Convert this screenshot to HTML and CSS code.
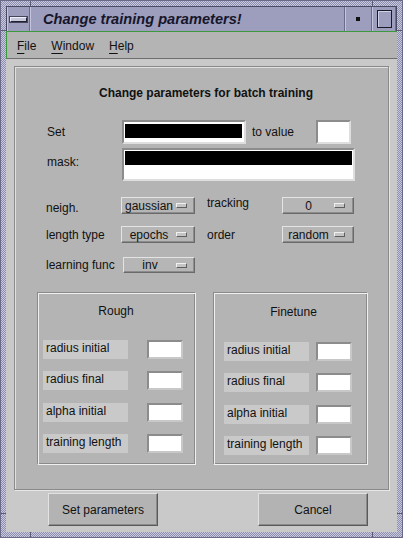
FILE: index.html
```html
<!DOCTYPE html>
<html>
<head>
<meta charset="utf-8">
<link rel="stylesheet" href="styles.css">
</head>
<body>
<div class="frame">
  <div class="titlebar">
    <div class="tb-btn tb-menu"><span class="tb-bar"></span></div>
    <div class="tb-title">Change training parameters!</div>
    <div class="tb-btn tb-min"><span class="tb-dot"></span></div>
    <div class="tb-btn tb-max"><span class="tb-sq"></span></div>
  </div>
  <div class="client">
    <div class="menubar">
      <span class="menu"><u>F</u>ile</span>
      <span class="menu"><u>W</u>indow</span>
      <span class="menu"><u>H</u>elp</span>
    </div>
    <div class="content">
      <div class="panel">
        <div class="heading">Change parameters for batch training</div>

        <div class="row row-set">
          <span class="lbl">Set</span>
          <div class="field field-set"><span class="sel"></span></div>
          <span class="lbl lbl-to">to value</span>
          <div class="field field-val"></div>
        </div>

        <div class="row row-mask">
          <span class="lbl lbl-mask">mask:</span>
          <div class="field field-mask"><span class="sel"></span></div>
        </div>

        <div class="row row-opt row-neigh">
          <span class="lbl lbl-low">neigh.</span>
          <div class="opt opt-a"><span class="opt-text">gaussian</span><span class="ind"></span></div>
          <span class="lbl lbl-2 lbl-high">tracking</span>
          <div class="opt opt-b"><span class="opt-text">0</span><span class="ind"></span></div>
        </div>

        <div class="row row-opt row-len">
          <span class="lbl">length type</span>
          <div class="opt opt-a"><span class="opt-text">epochs</span><span class="ind"></span></div>
          <span class="lbl lbl-2">order</span>
          <div class="opt opt-b"><span class="opt-text">random</span><span class="ind"></span></div>
        </div>

        <div class="row row-opt row-learn">
          <span class="lbl lbl-learn">learning func</span>
          <div class="opt opt-c"><span class="opt-text">inv</span><span class="ind"></span></div>
        </div>

        <div class="groups">
          <div class="group group-rough">
            <div class="group-title">Rough</div>
            <div class="group-rows">
              <div class="grow"><span class="glbl">radius initial</span><span class="gin"></span></div>
              <div class="grow"><span class="glbl">radius final</span><span class="gin"></span></div>
              <div class="grow"><span class="glbl">alpha initial</span><span class="gin"></span></div>
              <div class="grow"><span class="glbl">training length</span><span class="gin"></span></div>
            </div>
          </div>
          <div class="group group-fine">
            <div class="group-title">Finetune</div>
            <div class="group-rows">
              <div class="grow"><span class="glbl">radius initial</span><span class="gin"></span></div>
              <div class="grow"><span class="glbl">radius final</span><span class="gin"></span></div>
              <div class="grow"><span class="glbl">alpha initial</span><span class="gin"></span></div>
              <div class="grow"><span class="glbl">training length</span><span class="gin"></span></div>
            </div>
          </div>
        </div>
      </div>
      <div class="buttons">
        <div class="btn">Set parameters</div>
        <div class="btn">Cancel</div>
      </div>
    </div>
  </div>
</div>
</body>
</html>
```

FILE: styles.css
```css
* { box-sizing: border-box; }
html, body { margin: 0; padding: 0; }
body {
  width: 403px;
  height: 538px;
  overflow: hidden;
  font-family: "Liberation Sans", Arial, sans-serif;
  font-size: 12px;
  color: #000;
  background: #b4b4cc;
}

.frame {
  width: 403px;
  height: 538px;
  padding: 6px;
  display: flex;
  flex-direction: column;
  background:
    linear-gradient(#5a5a74, #5a5a74) 30px 0 / 1px 6px no-repeat,
    linear-gradient(#5a5a74, #5a5a74) 372px 0 / 1px 6px no-repeat,
    linear-gradient(#5a5a74, #5a5a74) 30px 532px / 1px 6px no-repeat,
    linear-gradient(#5a5a74, #5a5a74) 372px 532px / 1px 6px no-repeat,
    linear-gradient(#5a5a74, #5a5a74) 0 30px / 6px 1px no-repeat,
    linear-gradient(#5a5a74, #5a5a74) 0 513px / 6px 1px no-repeat,
    linear-gradient(#5a5a74, #5a5a74) 397px 30px / 6px 1px no-repeat,
    linear-gradient(#5a5a74, #5a5a74) 397px 513px / 6px 1px no-repeat,
    repeating-conic-gradient(#8e8eae 0 25%, #c8c8de 0 50%) 0 0 / 2px 2px;
  box-shadow: inset 0 0 0 1px #6a6a88;
}

/* title bar */
.titlebar {
  height: 25px;
  flex: none;
  display: flex;
  background: #9d9dbd;
  border: 1px solid #4a4a62;
  border-bottom: none;
}
.tb-btn {
  display: flex;
  align-items: center;
  justify-content: center;
  border-left: 1px solid #c4c4dc;
  border-right: 1px solid #6c6c8a;
}
.tb-menu { width: 23px; }
.tb-title {
  flex: 1;
  padding-left: 12px;
  font-weight: bold;
  font-style: italic;
  font-size: 14.6px;
  line-height: 24px;
  color: #16162a;
  border-left: 1px solid #c4c4dc;
  border-right: 1px solid #6c6c8a;
}
.tb-min { width: 27px; }
.tb-max { width: 24px; }
.tb-bar {
  width: 17px;
  height: 5px;
  background: #c8c8dc;
  border: 1px solid #22222e;
  border-top-color: #f0f0ff;
  border-left-color: #f0f0ff;
  box-shadow: 0 0 0 1px #44445a;
  margin-top: 1px;
}
.tb-dot {
  width: 4px;
  height: 4px;
  background: #111;
  margin-right: 2px;
}
.tb-sq {
  width: 15px;
  height: 18px;
  border: 1px solid #1a1a28;
  box-shadow: inset 1px 1px 0 #d0d0e6;
}

/* client */
.client {
  flex: 1;
  display: flex;
  flex-direction: column;
  background: #c9c9c9;
}
.menubar {
  height: 28px;
  flex: none;
  display: flex;
  align-items: center;
  gap: 15px;
  padding-left: 10px;
  padding-top: 1px;
  background: #b4b4b4;
  border-top: 1px solid #3c9a3c;
  border-left: 1px solid #3c9a3c;
  border-bottom: 1px solid #6e6e6e;
  color: #111;
}
.menu u { text-underline-offset: 3px; }

.content {
  flex: 1;
  display: flex;
  flex-direction: column;
  padding: 7px 8px 6px 8px;
}
.panel {
  height: 424px;
  flex: none;
  background: #b4b4b4;
  border: 1px solid #8a8a8a;
  box-shadow: 1px 1px 0 #e6e6e6, inset 1px 1px 0 #e0e0e0;
  display: flex;
  flex-direction: column;
  padding-left: 31px;
}
.heading {
  margin-top: 19px;
  margin-left: -22px;
  text-align: center;
  font-weight: bold;
  line-height: 14px;
  color: #111;
}

.row {
  display: flex;
  align-items: center;
}
.lbl {
  width: 75px;
  flex: none;
  line-height: 14px;
  color: #111;
}
.row-set { margin-top: 20px; height: 24px; margin-left: 1px; }
.lbl-to { width: 64px; margin-left: 6px; }
.field {
  background: #fff;
  border: 2px solid;
  border-color: #8c8c8c #dedede #dedede #8c8c8c;
}
.field-set { width: 124px; height: 24px; }
.field-val { width: 35px; height: 24px; }
.field-set .sel {
  display: block;
  height: 14px;
  margin: 2px 2px 0 1px;
  background: #000;
}
.row-mask { margin-top: 4px; height: 33px; align-items: flex-start; margin-left: 1px; }
.lbl-mask { margin-top: 7px; }
.field-mask { width: 233px; height: 33px; }
.field-mask .sel {
  display: block;
  height: 14px;
  margin: 1px 1px 0 1px;
  background: #000;
}

.row-opt { height: 17px; }
.row-neigh { margin-top: 16px; }
.row-len { margin-top: 12px; }
.row-learn { margin-top: 14px; height: 16px; }
.lbl-low { position: relative; top: 2px; }
.lbl-high { position: relative; top: -3px; }
.lbl-2 { margin-left: 12px; }
.lbl-learn { width: 77px; }

.opt {
  height: 100%;
  display: flex;
  align-items: center;
  padding-right: 7px;
  background: #b6b6b6;
  border: 1px solid;
  border-color: #e4e4e4 #6a6a6a #6a6a6a #e4e4e4;
  box-shadow: inset -1px -1px 0 #8c8c8c;
  color: #111;
}
.opt-a { width: 74px; }
.opt-b { width: 72px; padding-right: 8px; }
.opt-c { width: 72px; }
.opt-text {
  flex: 1;
  text-align: center;
  line-height: 14px;
  white-space: nowrap;
}
.ind {
  width: 11px;
  height: 5px;
  flex: none;
  background: #c4c4c4;
  border: 1px solid;
  border-color: #f0f0f0 #5e5e5e #5e5e5e #f0f0f0;
}

/* group boxes */
.groups {
  margin-top: 19px;
  margin-left: -9px;
  display: flex;
  gap: 17px;
}
.group {
  height: 173px;
  border: 1px solid;
  border-color: #8a8a8a #f0f0f0 #f0f0f0 #8a8a8a;
  box-shadow: inset 1px 1px 0 #f0f0f0, inset -1px -1px 0 #8a8a8a;
  display: flex;
  flex-direction: column;
}
.group-rough { width: 159px; padding: 11px 0 0 5px; }
.group-fine { width: 155px; padding: 12px 0 0 10px; }
.group-title {
  line-height: 14px;
  text-align: center;
  color: #111;
}
.group-rough .group-title { margin-right: 6px; }
.group-fine .group-title { margin-left: -4px; }
.group-rows {
  display: flex;
  flex-direction: column;
  gap: 12.33px;
}
.group-rough .group-rows { margin-top: 22px; }
.group-fine .group-rows { margin-top: 23px; }
.grow {
  display: flex;
  height: 19px;
}
.glbl {
  width: 85px;
  flex: none;
  background: #c9c9c9;
  padding-left: 3px;
  line-height: 17px;
  color: #111;
  white-space: nowrap;
}
.group-rough .glbl { margin-right: 19px; }
.group-fine .glbl { margin-right: 7px; }
.gin {
  width: 36px;
  height: 19px;
  background: #fff;
  border: 2px solid;
  border-color: #8c8c8c #c8c8c8 #c8c8c8 #8c8c8c;
}

/* bottom buttons */
.buttons {
  margin-top: 3px;
  display: flex;
  gap: 100px;
  padding-left: 34px;
}
.btn {
  width: 110px;
  height: 33px;
  display: flex;
  align-items: center;
  justify-content: center;
  background: #b3b3b3;
  border: 1px solid;
  border-color: #e2e2e2 #5a5a5a #5a5a5a #e2e2e2;
  box-shadow: inset -1px -1px 0 #8a8a8a;
  color: #111;
}
```
